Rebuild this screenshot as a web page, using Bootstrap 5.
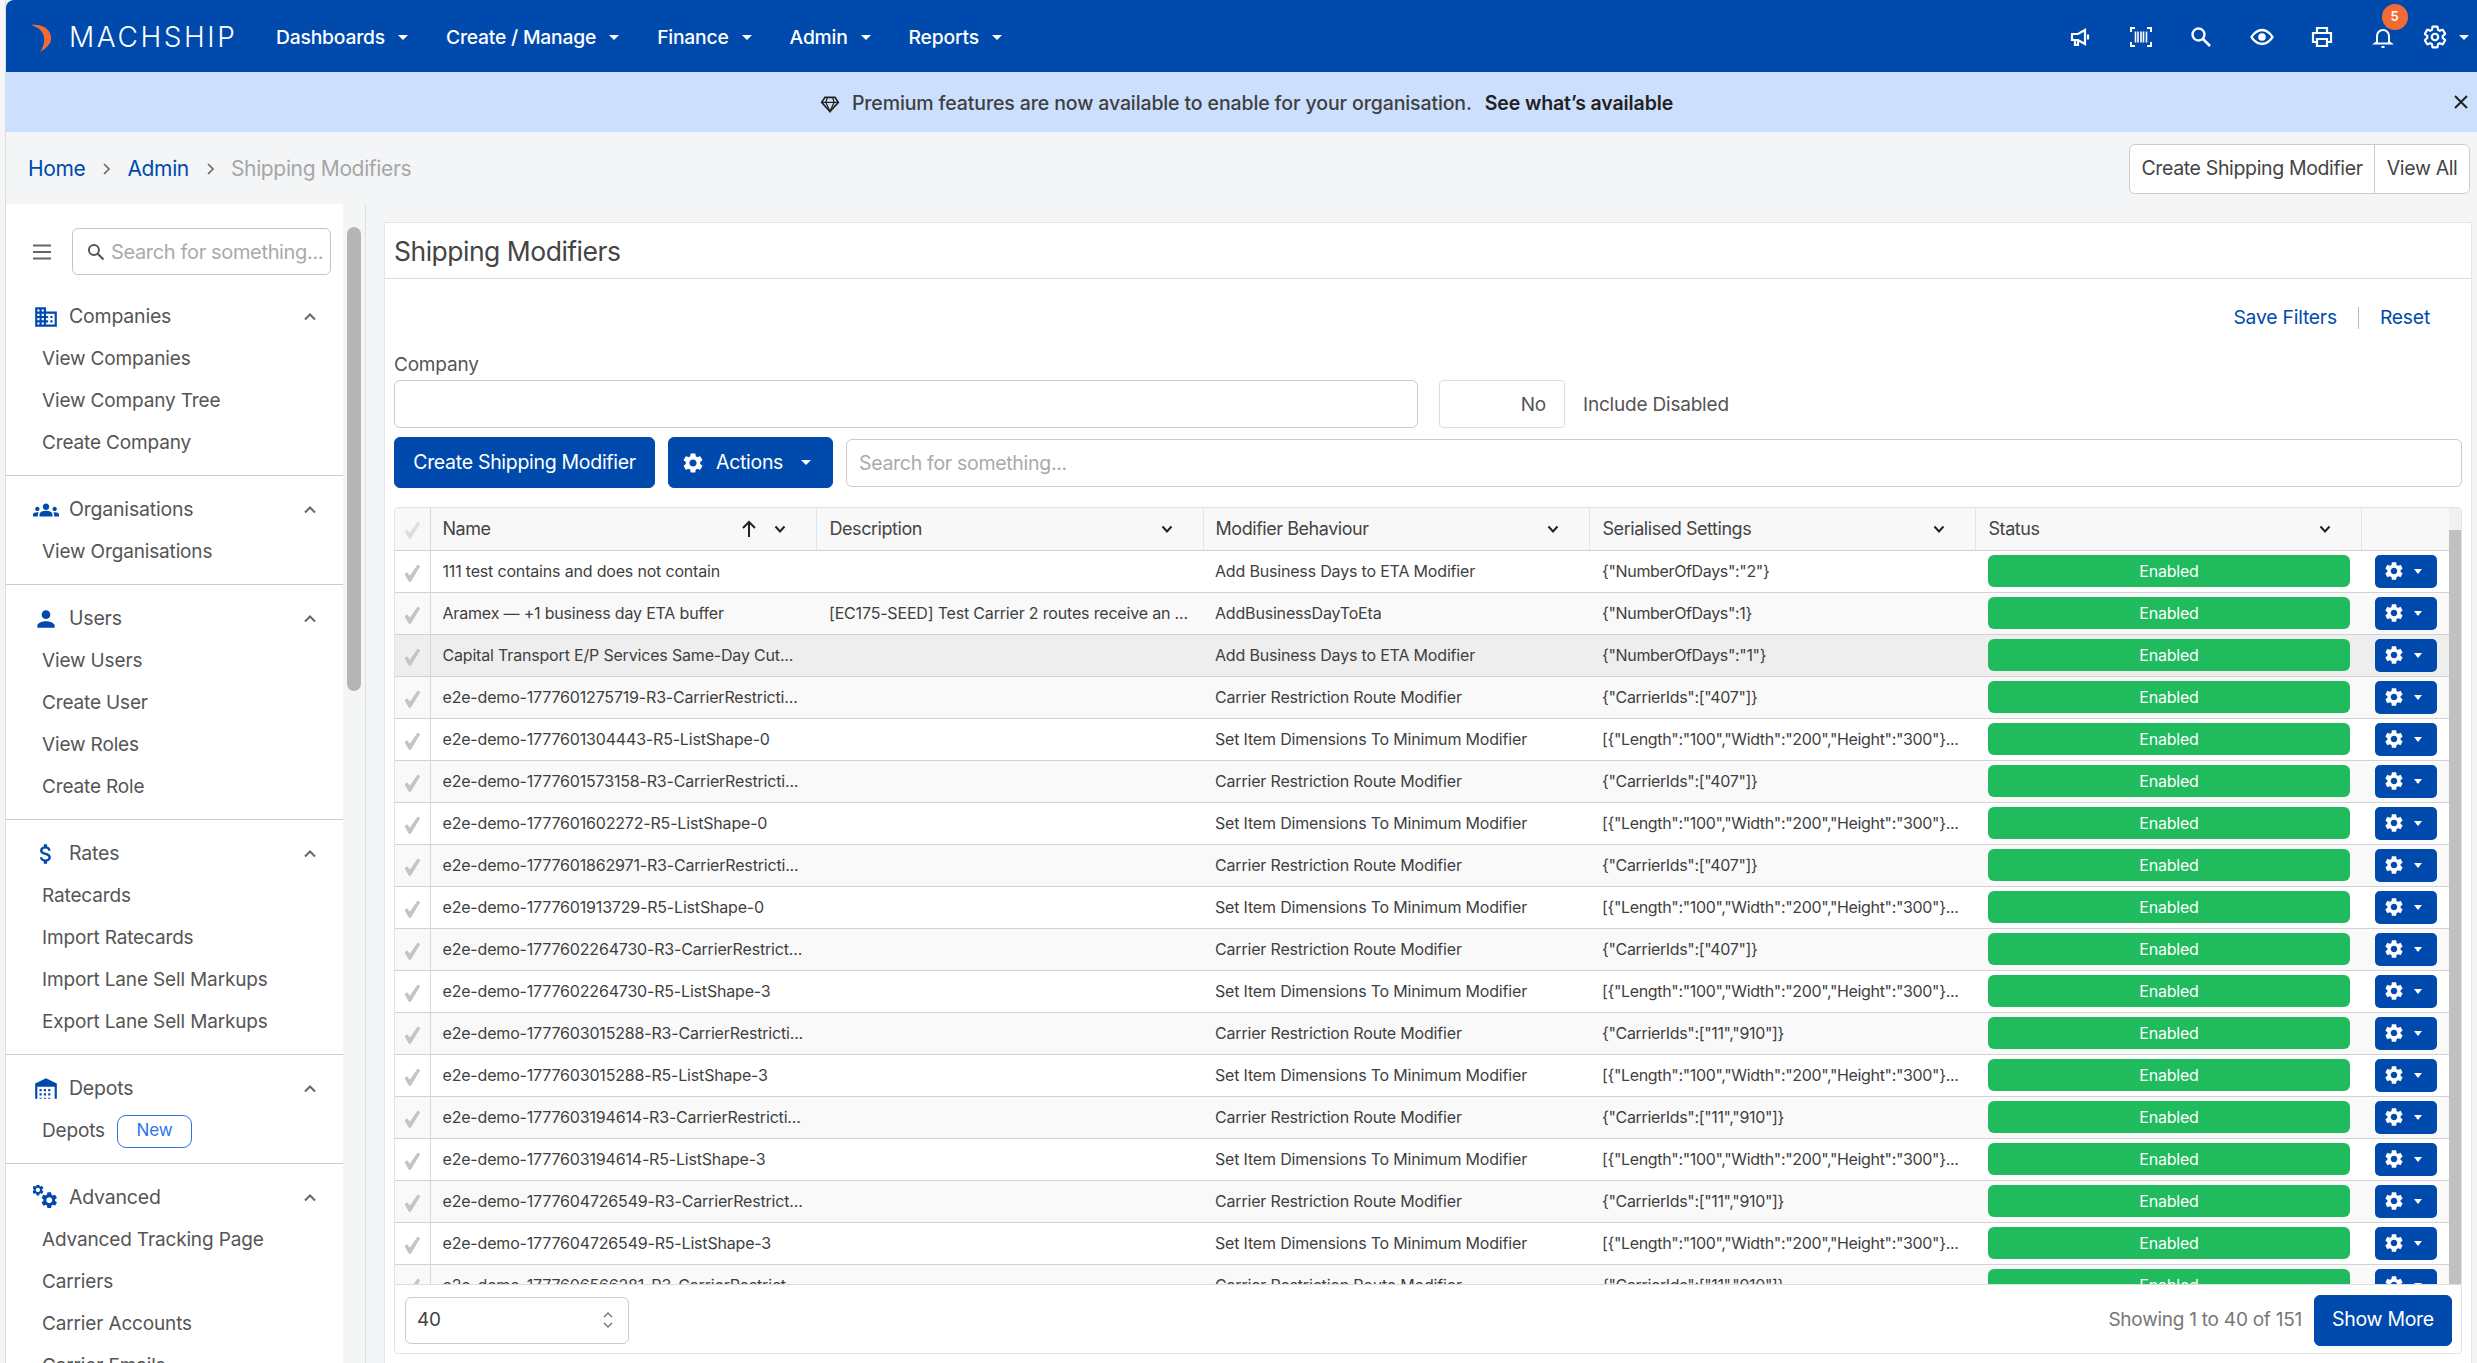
<!DOCTYPE html>
<html lang="en">
<head>
  <meta charset="UTF-8" />
  <title>Shipping Modifiers</title>
  <link href="https://cdn.jsdelivr.net/npm/bootstrap@5.3.0/dist/css/bootstrap.min.css" rel="stylesheet" />
  <style>
    :root { --ms-blue: #004aad; --ms-line: #d9d9d9; }
    html, body { height: 100%; overflow: hidden; }
    body { font-family: Inter, "Noto Sans", sans-serif; font-size: 19px; color: #444; background: #f4f5f7; letter-spacing: -0.2px; }
    a { text-decoration: none; }
    .shell { height: 1363px; margin-left: 5px; border-left: 1px solid #ddd; display: flex; flex-direction: column; }

    /* top bar */
    .ms-top { height: 72px; flex: none; background: var(--ms-blue); padding: 0; border-top-left-radius: 8px; flex-wrap: nowrap; justify-content: flex-start; }
    .ms-logo { display: flex; align-items: center; margin-left: 24px; width: 246px; color: #fff; font-size: 28px; font-weight: 300; letter-spacing: 2.6px; padding-top: 2px; }
    .ms-logo svg { width: 36px; height: 30px; margin-right: 3px; flex: none; }
    .ms-menu { display: flex; gap: 38px; align-items: center; color: #fff; font-size: 19.3px; font-weight: 500; padding-top: 3px; }
    .ms-menu span { display: flex; align-items: center; gap: 13px; white-space: nowrap; }
    .caret-w { width: 0; height: 0; border-left: 5px solid transparent; border-right: 5px solid transparent; border-top: 5px solid currentColor; display: inline-block; }
    .ms-tools { margin-left: auto; display: flex; align-items: center; color: #fff; padding-top: 2px; }
    .ms-tool { width: 60.5px; display: flex; justify-content: center; position: relative; }
    .ms-tool svg { width: 24px; height: 24px; }
    .ms-tool-last { display: flex; align-items: center; gap: 11px; margin-left: 9px; padding-right: 8px; }
    .ms-tool-last svg { width: 26px; height: 26px; }
    .ms-count { position: absolute; top: -21px; left: 29px; width: 26px; height: 26px; border-radius: 50%; background: #f26b35; color: #fff; font-size: 13px; font-weight: 600; display: flex; align-items: center; justify-content: center; letter-spacing: 0; }

    /* banner */
    .ms-promo { height: 60px; flex: none; background: #cce0fe; position: relative; display: flex; align-items: center; justify-content: center; gap: 13px; font-size: 19.5px; letter-spacing: -0.12px; color: #3f3f3f; font-weight: 500; padding: 3px 0 0 10px; }
    .ms-promo strong { color: #222; font-weight: 600; }
    .ms-promo svg { width: 20px; height: 20px; margin-right: -1px; }
    .ms-promo-x { position: absolute; right: 7px; top: 20px; width: 20px; height: 20px; }

    /* breadcrumb row */
    .ms-crumbs { height: 72px; flex: none; display: flex; align-items: center; justify-content: space-between; padding: 2px 7px 0 22px; }
    .ms-crumbs .breadcrumb { margin: 0; font-size: 21px; --bs-breadcrumb-item-padding-x: 0; --bs-breadcrumb-divider: none; align-items: center; gap: 14px; letter-spacing: -0.35px; }
    .ms-crumbs .breadcrumb-item + .breadcrumb-item::before { display: none; }
    .ms-crumbs .breadcrumb-item a { color: var(--ms-blue); }
    .ms-crumbs .breadcrumb-item.active { color: #a6a6a6; }
    .chev-s { width: 14px; height: 14px; color: #666; }
    .ms-pair .btn { background: #fff; border-color: #ccc; color: #444; font-size: 19.5px; height: 50px; padding: 0 11.5px; letter-spacing: -0.35px; }

    /* layout */
    .ms-work { flex: 1; display: flex; min-height: 0; }
    .ms-side { width: 337px; flex: none; background: #fff; overflow: hidden; padding-top: 24px; }
    .rail-a { width: 14px; flex: none; margin: 23px 4px 0 4px; }
    .rail-a div { height: 464px; background: #b5b5b5; border-radius: 7px; }
    .ms-vline { width: 1px; flex: none; background: #e0e0e0; }
    .ms-panel { flex: 1; margin: 18px 5px 0 18px; background: #fff; border: 1px solid #e6e6e6; border-bottom: 0; min-width: 0; }

    /* sidebar */
    .side-find { display: flex; align-items: center; padding-left: 24px; }
    .side-find svg.burger { width: 24px; height: 24px; color: #666; }
    .side-box { margin-left: 18px; width: 259px; height: 47px; border: 1px solid #c4c4c4; border-radius: 6px; display: flex; align-items: center; padding: 1px 0 0 13px; gap: 5px; color: #aaa; font-size: 20px; white-space: nowrap; letter-spacing: -0.35px; }
    .side-box svg { width: 20px; height: 20px; color: #555; flex: none; }
    .side-group { padding: 13px 0 11px; border-bottom: 1px solid #ccc; }
    .side-group:first-of-type { padding-top: 21px; }
    .side-group:last-child { border-bottom: 0; }
    .side-head { height: 42px; display: flex; align-items: center; padding-left: 27px; color: #555; font-size: 19.5px; position: relative; }
    .side-head > svg:first-child { width: 26px; height: 26px; color: var(--ms-blue); margin-right: 10px; flex: none; }
    .side-up { position: absolute; left: 297px; top: 14px; width: 14px; height: 14px; color: #666; margin: 0; }
    .side-link { height: 42px; display: flex; align-items: center; padding-left: 36px; color: #555; font-size: 19px; gap: 12px; white-space: nowrap; letter-spacing: -0.15px; }
    .tag-new { width: 75px; height: 33px; border: 1px solid #2f73e8; border-radius: 9px; color: #2f73e8; font-size: 17px; display: flex; align-items: center; justify-content: center; }

    /* panel */
    .panel-title { height: 56px; display: flex; align-items: center; padding: 2px 0 0 9px; font-size: 26.5px; font-weight: 400; color: #444; border-bottom: 1px solid #ddd; margin: 0; letter-spacing: -0.5px; }
    .panel-body { padding: 0 9px; }
    .filter-links { display: flex; justify-content: flex-end; align-items: center; padding: 26px 32px 0 0; height: 51px; font-size: 19.3px; letter-spacing: -0.2px; }
    .filter-links a { color: var(--ms-blue); }
    .filter-links i { width: 1px; height: 22px; background: #bbb; margin: 0 21px; }
    .field-label { margin: 22px 0 4px; height: 24px; line-height: 26px; font-size: 19px; color: #555; }
    .company-row { display: flex; align-items: center; height: 48px; }
    .company-row .form-control { width: 1024px; height: 48px; border-color: #ccc; }
    .no-box { width: 126px; height: 48px; margin-left: 21px; border: 1px solid #ddd; border-radius: 4px; display: flex; align-items: center; justify-content: flex-end; padding: 2px 18px 0 0; color: #555; }
    .no-label { margin-left: 18px; padding-top: 2px; color: #555; }
    .act-row { display: flex; gap: 13px; align-items: center; margin-top: 9px; height: 51px; }
    .btn-ms { background: var(--ms-blue); border-color: var(--ms-blue); color: #fff; font-size: 19.5px; height: 51px; display: inline-flex; align-items: center; letter-spacing: -0.3px; border-radius: 6px; white-space: nowrap; }
    .btn-ms:hover { background: var(--ms-blue); color: #fff; }
    .act-row .btn-create { width: 261px; justify-content: center; padding: 0; }
    .act-row .btn-actions { width: 165px; padding: 0 0 0 12px; }
    .act-row .btn-actions svg { width: 24px; height: 24px; margin-right: 11px; }
    .act-row .btn-actions .caret-w { margin-left: 18px; }
    .act-row .form-control { height: 48px; flex: 1; border-color: #ccc; font-size: 19.5px; padding-left: 12px; letter-spacing: -0.3px; }
    .act-row .form-control::placeholder { color: #aaa; }

    /* grid */
    .grid-card { margin-top: 19px; height: 847px; border: 1px solid #e3e3e3; border-radius: 4px; overflow: hidden; }
    .grid-top { display: flex; height: 776px; }
    .grid-scroll { width: 2054px; flex: none; overflow: hidden; }
    .rail-b { flex: 1; background: #f1f1f1; padding-top: 22px; }
    .rail-b div { height: 100%; background: #c1c1c1; }
    .ms-table { table-layout: fixed; width: 2054px; margin: 0; font-size: 16px; color: #3f3f3f; letter-spacing: -0.18px; }
    .ms-table > :not(caption) > * > * { padding: 0 4px 0 13px; height: 42px; vertical-align: middle; border-bottom: 1px solid #d2d2d2; white-space: nowrap; overflow: hidden; }
    .ms-table > :not(caption) > * > :nth-child(2), .ms-table > :not(caption) > * > :nth-child(4) { padding-left: 12px; }
    .ms-table th { --bs-table-bg: #f8f8f8; font-weight: 400; font-size: 18px; border-right: 1px solid #e4e4e4; color: #444; letter-spacing: -0.45px; }
    .ms-table th:first-child, .ms-table td:first-child { border-right: 1px solid #d8d8d8; padding: 0; text-align: center; }
    .ms-table th:last-child { border-right: 0; }
    .ms-table tbody tr:nth-child(even) > td { --bs-table-bg: #f9f9f9; }
    .ms-table tbody tr.row-hover > td { --bs-table-bg: #eeeeee; }
    .ms-table td.col-json { letter-spacing: -0.35px; }
    .ms-table td.col-act { padding: 0 0 0 14px; }
    .ms-table td.col-status { padding: 0 11px 0 13px; }
    .th-inner { display: flex; align-items: center; }
    .th-inner .chev-d { width: 14px; height: 14px; margin-left: auto; margin-right: 25px; color: #222; flex: none; }
    .th-inner .sort-up { width: 20px; height: 20px; margin-left: auto; margin-right: 14px; color: #222; flex: none; }
    .th-inner .sort-up + .chev-d { margin-left: 0; }
    .tick { width: 20px; height: 20px; color: #c4c4c4; }
    th .tick { color: #dedede; }
    .state-on { background: #1fbb5c; color: #fff; height: 32px; border-radius: 6px; display: flex; align-items: center; justify-content: center; letter-spacing: -0.2px; }
    .gear-btn { background: var(--ms-blue); color: #fff; width: 62px; height: 33px; border-radius: 5px; display: flex; align-items: center; padding-left: 8px; gap: 9px; }
    .gear-btn svg { width: 22px; height: 22px; }
    .gear-btn .caret-w { border-left-width: 4.5px; border-right-width: 4.5px; }
    .grid-foot { height: 70px; border-top: 1px solid #ddd; display: flex; align-items: center; padding: 1px 9px 0 10px; }
    .page-size { width: 224px; height: 47px; border: 1px solid #ccc; border-radius: 6px; display: flex; align-items: center; justify-content: space-between; padding: 0 14px 0 11px; color: #444; }
    .page-size svg { width: 12px; height: 24px; color: #777; }
    .show-count { margin-left: auto; margin-right: 12px; color: #777; letter-spacing: -0.25px; }
    .btn-more { width: 138px; justify-content: center; padding: 0; }
  </style>
</head>
<body>
<svg width="0" height="0" class="d-block">
  <defs>
    <symbol id="i-gear" viewBox="0 0 24 24"><path fill="currentColor" d="M19.14,12.94c0.04-0.3,0.06-0.61,0.06-0.94c0-0.32-0.02-0.64-0.07-0.94l2.03-1.58c0.18-0.14,0.23-0.41,0.12-0.61 l-1.92-3.32c-0.12-0.22-0.37-0.29-0.59-0.22l-2.39,0.96c-0.5-0.38-1.03-0.7-1.62-0.94L14.4,2.81c-0.04-0.24-0.24-0.41-0.48-0.41 h-3.84c-0.24,0-0.43,0.17-0.47,0.41L9.25,5.35C8.66,5.59,8.12,5.92,7.63,6.29L5.24,5.33c-0.22-0.08-0.47,0-0.59,0.22L2.74,8.87 C2.62,9.08,2.66,9.34,2.86,9.48l2.03,1.58C4.84,11.36,4.8,11.69,4.8,12s0.02,0.64,0.07,0.94l-2.03,1.58 c-0.18,0.14-0.23,0.41-0.12,0.61l1.92,3.32c0.12,0.22,0.37,0.29,0.59,0.22l2.39-0.96c0.5,0.38,1.03,0.7,1.62,0.94l0.36,2.54 c0.05,0.24,0.24,0.41,0.48,0.41h3.84c0.24,0,0.44-0.17,0.47-0.41l0.36-2.54c0.59-0.24,1.13-0.56,1.62-0.94l2.39,0.96 c0.22,0.08,0.47,0,0.59-0.22l1.92-3.32c0.12-0.22,0.07-0.47-0.12-0.61L19.14,12.94z M12,15.6c-1.98,0-3.6-1.62-3.6-3.6 s1.62-3.6,3.6-3.6s3.6,1.62,3.6,3.6S13.98,15.6,12,15.6z"/></symbol>
    <symbol id="i-gear-o" viewBox="0 0 24 24"><path fill="none" stroke="currentColor" stroke-width="2" d="M19.14,12.94c0.04-0.3,0.06-0.61,0.06-0.94c0-0.32-0.02-0.64-0.07-0.94l2.03-1.58c0.18-0.14,0.23-0.41,0.12-0.61 l-1.92-3.32c-0.12-0.22-0.37-0.29-0.59-0.22l-2.39,0.96c-0.5-0.38-1.03-0.7-1.62-0.94L14.4,2.81c-0.04-0.24-0.24-0.41-0.48-0.41 h-3.84c-0.24,0-0.43,0.17-0.47,0.41L9.25,5.35C8.66,5.59,8.12,5.92,7.63,6.29L5.24,5.33c-0.22-0.08-0.47,0-0.59,0.22L2.74,8.87 C2.62,9.08,2.66,9.34,2.86,9.48l2.03,1.58C4.84,11.36,4.8,11.69,4.8,12s0.02,0.64,0.07,0.94l-2.03,1.58 c-0.18,0.14-0.23,0.41-0.12,0.61l1.92,3.32c0.12,0.22,0.37,0.29,0.59,0.22l2.39-0.96c0.5,0.38,1.03,0.7,1.62,0.94l0.36,2.54 c0.05,0.24,0.24,0.41,0.48,0.41h3.84c0.24,0,0.44-0.17,0.47-0.41l0.36-2.54c0.59-0.24,1.13-0.56,1.62-0.94l2.39,0.96 c0.22,0.08,0.47,0,0.59-0.22l1.92-3.32c0.12-0.22,0.07-0.47-0.12-0.61L19.14,12.94z"/><circle cx="12" cy="12" r="3" fill="none" stroke="currentColor" stroke-width="2"/></symbol>
    <symbol id="i-up" viewBox="0 0 14 14"><path d="M2 9.5 7 4.5l5 5" fill="none" stroke="currentColor" stroke-width="2"/></symbol>
    <symbol id="i-down" viewBox="0 0 14 14"><path d="M2.5 4.5 7 9.5l4.5-5" fill="none" stroke="currentColor" stroke-width="2"/></symbol>
    <symbol id="i-right" viewBox="0 0 14 14"><path d="M5 2l5 5-5 5" fill="none" stroke="currentColor" stroke-width="1.6"/></symbol>
    <symbol id="i-find" viewBox="0 0 24 24"><circle cx="9.5" cy="9.5" r="6" fill="none" stroke="currentColor" stroke-width="2.4"/><path d="M14 14l7 7" stroke="currentColor" stroke-width="2.6"/></symbol>
    <symbol id="i-tick" viewBox="0 0 24 24"><path fill="currentColor" d="M3 13.5 6.2 11l3.2 4.2L18.6 2 22 3.6 10.6 22.5h-2.4z"/></symbol>
  </defs>
</svg>

<div class="shell">
  <!-- Top navigation -->
  <nav class="navbar ms-top">
    <div class="ms-logo">
      <svg viewBox="0 0 36 30"><path fill="#f26b35" d="M1 3c10-1 19 3 20 12 1 7-6 12-11 15 3-4 5-10 4-15C13 9 8 5 1 3z"/></svg>
      <span>MACHSHIP</span>
    </div>
    <div class="ms-menu">
      <span>Dashboards <i class="caret-w"></i></span>
      <span>Create / Manage <i class="caret-w"></i></span>
      <span>Finance <i class="caret-w"></i></span>
      <span>Admin <i class="caret-w"></i></span>
      <span>Reports <i class="caret-w"></i></span>
    </div>
    <div class="ms-tools">
      <div class="ms-tool"><svg viewBox="0 0 24 24" fill="none" stroke="currentColor" stroke-width="2.2"><path d="M4 9h6l7-4v14l-7-4H4z"/><path d="M7 15v5h3v-5"/><path d="M20 9.5v5" /></svg></div>
      <div class="ms-tool"><svg viewBox="0 0 24 24" fill="none" stroke="currentColor" stroke-width="2"><path d="M6 3H2v4M18 3h4v4M6 21H2v-4M18 21h4v-4"/><path d="M6.5 6.5v11M9 6.5v11M12 6.5v11M14.5 6.5v11M17.5 6.5v11" stroke-width="1.6"/></svg></div>
      <div class="ms-tool"><svg><use href="#i-find"/></svg></div>
      <div class="ms-tool"><svg viewBox="0 0 24 24" fill="none" stroke="currentColor" stroke-width="2.4"><path d="M1.5 12S5.5 5 12 5s10.5 7 10.5 7-4 7-10.5 7S1.5 12 1.5 12z"/><circle cx="12" cy="12" r="2.6" fill="currentColor"/></svg></div>
      <div class="ms-tool"><svg viewBox="0 0 24 24" fill="none" stroke="currentColor" stroke-width="2.2"><path d="M7 8V3h10v5"/><path d="M7 17H3V8h18v9h-4"/><path d="M7 14h10v7H7z"/></svg></div>
      <div class="ms-tool"><svg viewBox="0 0 24 24" fill="none" stroke="currentColor" stroke-width="2"><path d="M6 17V11a6 6 0 0 1 12 0v6l2 1.5H4z"/><path d="M10.5 22h3"/></svg><span class="ms-count">5</span></div>
      <div class="ms-tool-last"><svg><use href="#i-gear-o"/></svg><i class="caret-w"></i></div>
    </div>
  </nav>

  <!-- Premium banner -->
  <div class="ms-promo">
    <svg viewBox="0 0 24 24" fill="none" stroke="#222" stroke-width="2"><path d="M6 4h12l4 6-10 11L2 10z"/><path d="M2 10h20M9 4l-2 6 5 11 5-11-2-6" stroke-width="1.5"/></svg>
    <span>Premium features are now available to enable for your organisation.</span>
    <strong>See what’s available</strong>
    <svg class="ms-promo-x" viewBox="0 0 20 20" stroke="#222" stroke-width="2"><path d="M4 4l12 12M16 4 4 16"/></svg>
  </div>

  <!-- Breadcrumb and page actions -->
  <div class="ms-crumbs">
    <ol class="breadcrumb">
      <li class="breadcrumb-item"><a href="#">Home</a></li>
      <svg class="chev-s"><use href="#i-right"/></svg>
      <li class="breadcrumb-item"><a href="#">Admin</a></li>
      <svg class="chev-s"><use href="#i-right"/></svg>
      <li class="breadcrumb-item active">Shipping Modifiers</li>
    </ol>
    <div class="btn-group ms-pair">
      <button class="btn">Create Shipping Modifier</button>
      <button class="btn">View All</button>
    </div>
  </div>

  <div class="ms-work">
    <!-- Sidebar -->
    <aside class="ms-side">
      <div class="side-find">
        <svg class="burger" viewBox="0 0 24 24" stroke="currentColor" stroke-width="2"><path d="M3 5.5h18M3 12h18M3 18.5h18"/></svg>
        <div class="side-box"><svg><use href="#i-find"/></svg>Search for something...</div>
      </div>
      <div id="sideMenu"></div>
    </aside>
    <div class="rail-a"><div></div></div>
    <div class="ms-vline"></div>

    <!-- Main panel -->
    <main class="ms-panel">
      <h1 class="panel-title">Shipping Modifiers</h1>
      <div class="panel-body">
        <div class="filter-links"><a href="#">Save Filters</a><i></i><a href="#">Reset</a></div>
        <div class="field-label">Company</div>
        <div class="company-row">
          <input type="text" class="form-control" />
          <div class="no-box">No</div>
          <div class="no-label">Include Disabled</div>
        </div>
        <div class="act-row">
          <button class="btn btn-ms btn-create">Create Shipping Modifier</button>
          <button class="btn btn-ms btn-actions"><svg><use href="#i-gear"/></svg>Actions<i class="caret-w"></i></button>
          <input type="text" class="form-control" placeholder="Search for something..." />
        </div>

        <div class="grid-card">
          <div class="grid-top">
            <div class="grid-scroll">
              <table class="table ms-table">
                <colgroup><col style="width:35px"><col style="width:386px"><col style="width:387px"><col style="width:386px"><col style="width:386px"><col style="width:386px"><col style="width:88px"></colgroup>
                <thead>
                  <tr>
                    <th><svg class="tick"><use href="#i-tick"/></svg></th>
                    <th><div class="th-inner">Name<svg class="sort-up" viewBox="0 0 20 20" fill="none" stroke="currentColor" stroke-width="2"><path d="M10 18V3M4 9l6-6 6 6"/></svg><svg class="chev-d"><use href="#i-down"/></svg></div></th>
                    <th><div class="th-inner">Description<svg class="chev-d"><use href="#i-down"/></svg></div></th>
                    <th><div class="th-inner">Modifier Behaviour<svg class="chev-d"><use href="#i-down"/></svg></div></th>
                    <th><div class="th-inner">Serialised Settings<svg class="chev-d"><use href="#i-down"/></svg></div></th>
                    <th><div class="th-inner">Status<svg class="chev-d"><use href="#i-down"/></svg></div></th>
                    <th></th>
                  </tr>
                </thead>
                <tbody id="modifierRows"></tbody>
              </table>
            </div>
            <div class="rail-b"><div></div></div>
          </div>
          <div class="grid-foot">
            <div class="page-size">40<svg viewBox="0 0 12 24" fill="none" stroke="currentColor" stroke-width="1.5"><path d="M2 9l4-4 4 4M2 15l4 4 4-4"/></svg></div>
            <span class="show-count">Showing 1 to 40 of 151</span>
            <button class="btn btn-ms btn-more">Show More</button>
          </div>
        </div>
      </div>
    </main>
  </div>
</div>

<script src="https://cdn.jsdelivr.net/npm/bootstrap@5.3.0/dist/js/bootstrap.bundle.min.js"></script>
<script>
  const sideIcons = {
    building: '<path fill="currentColor" d="M12 7V3H2v18h20V7H12zM6 19H4v-2h2v2zm0-4H4v-2h2v2zm0-4H4V9h2v2zm0-4H4V5h2v2zm4 12H8v-2h2v2zm0-4H8v-2h2v2zm0-4H8V9h2v2zm0-4H8V5h2v2zm10 12h-8v-2h2v-2h-2v-2h2v-2h-2V9h8v10zm-2-8h-2v2h2v-2zm0 4h-2v2h2v-2z"/>',
    groups: '<path fill="currentColor" d="M12 12.75c1.63 0 3.07.39 4.24.9 1.08.48 1.76 1.56 1.76 2.73V18H6v-1.61c0-1.18.68-2.26 1.76-2.73 1.17-.52 2.61-.91 4.24-.91zM4 13c1.1 0 2-.9 2-2s-.9-2-2-2-2 .9-2 2 .9 2 2 2zm1.13 1.1C4.76 14.04 4.39 14 4 14c-.99 0-1.93.21-2.78.58C.48 14.9 0 15.62 0 16.43V18h4.5v-1.61c0-.83.23-1.61.63-2.29zM20 13c1.1 0 2-.9 2-2s-.9-2-2-2-2 .9-2 2 .9 2 2 2zm4 3.43c0-.81-.48-1.53-1.22-1.85C21.93 14.21 20.99 14 20 14c-.39 0-.76.04-1.13.1.4.68.63 1.46.63 2.29V18H24v-1.57zM12 6c1.66 0 3 1.34 3 3s-1.34 3-3 3-3-1.34-3-3 1.34-3 3-3z"/>',
    person: '<path fill="currentColor" d="M12 12c2.21 0 4-1.79 4-4s-1.79-4-4-4-4 1.79-4 4 1.79 4 4 4zm0 2c-2.67 0-8 1.34-8 4v2h16v-2c0-2.66-5.33-4-8-4z"/>',
    money: '<path fill="currentColor" d="M11.8 10.9c-2.27-.59-3-1.2-3-2.15 0-1.09 1.01-1.85 2.7-1.85 1.78 0 2.44.85 2.5 2.1h2.21c-.07-1.72-1.12-3.3-3.21-3.81V3h-3v2.16c-1.94.42-3.5 1.68-3.5 3.61 0 2.31 1.91 3.46 4.7 4.13 2.5.6 3 1.48 3 2.41 0 .69-.49 1.79-2.7 1.79-2.06 0-2.87-.92-2.98-2.1h-2.2c.12 2.19 1.76 3.42 3.68 3.83V21h3v-2.15c1.95-.37 3.5-1.5 3.5-3.55 0-2.84-2.43-3.81-4.7-4.4z"/>',
    depot: '<path fill="currentColor" d="M12 2 2 7v14h2V10h16v11h2V7zM6 12h2v2H6zm4 0h2v2h-2zm4 0h2v2h-2zm-8 4h2v2H6zm4 0h2v2h-2zm4 0h2v2h-2zM6 20h2v1H6zm4 0h2v1h-2zm4 0h2v1h-2z"/>',
    gears: '<use href="#i-gear" x="-2" y="-2" width="13" height="13"/><use href="#i-gear" x="6" y="5" width="18" height="18"/>'
  };

  const sideMenu = [
    { title: 'Companies', icon: 'building', links: ['View Companies', 'View Company Tree', 'Create Company'] },
    { title: 'Organisations', icon: 'groups', links: ['View Organisations'] },
    { title: 'Users', icon: 'person', links: ['View Users', 'Create User', 'View Roles', 'Create Role'] },
    { title: 'Rates', icon: 'money', links: ['Ratecards', 'Import Ratecards', 'Import Lane Sell Markups', 'Export Lane Sell Markups'] },
    { title: 'Depots', icon: 'depot', links: ['Depots|new'] },
    { title: 'Advanced', icon: 'gears', links: ['Advanced Tracking Page', 'Carriers', 'Carrier Accounts', 'Carrier Emails'] }
  ];

  // Sidebar groups
  document.getElementById('sideMenu').innerHTML = sideMenu.map(g => `
    <div class="side-group">
      <div class="side-head">
        <svg viewBox="0 0 24 24">${sideIcons[g.icon]}</svg>${g.title}
        <svg class="side-up"><use href="#i-up"/></svg>
      </div>
      ${g.links.map(l => {
        const [text, flag] = l.split('|');
        return `<div class="side-link">${text}${flag ? '<span class="tag-new">New</span>' : ''}</div>`;
      }).join('')}
    </div>`).join('');

  const ETA = 'Add Business Days to ETA Modifier';
  const ROUTE = 'Carrier Restriction Route Modifier';
  const DIMS = 'Set Item Dimensions To Minimum Modifier';
  const dimsJson = '[{"Length":"100","Width":"200","Height":"300"}...';
  const c407 = '{"CarrierIds":["407"]}';
  const c910 = '{"CarrierIds":["11","910"]}';

  const modifiers = [
    ['111 test contains and does not contain', '', ETA, '{"NumberOfDays":"2"}'],
    ['Aramex — +1 business day ETA buffer', '[EC175-SEED] Test Carrier 2 routes receive an ...', 'AddBusinessDayToEta', '{"NumberOfDays":1}'],
    ['Capital Transport E/P Services Same-Day Cut...', '', ETA, '{"NumberOfDays":"1"}'],
    ['e2e-demo-1777601275719-R3-CarrierRestricti...', '', ROUTE, c407],
    ['e2e-demo-1777601304443-R5-ListShape-0', '', DIMS, dimsJson],
    ['e2e-demo-1777601573158-R3-CarrierRestricti...', '', ROUTE, c407],
    ['e2e-demo-1777601602272-R5-ListShape-0', '', DIMS, dimsJson],
    ['e2e-demo-1777601862971-R3-CarrierRestricti...', '', ROUTE, c407],
    ['e2e-demo-1777601913729-R5-ListShape-0', '', DIMS, dimsJson],
    ['e2e-demo-1777602264730-R3-CarrierRestrict...', '', ROUTE, c407],
    ['e2e-demo-1777602264730-R5-ListShape-3', '', DIMS, dimsJson],
    ['e2e-demo-1777603015288-R3-CarrierRestricti...', '', ROUTE, c910],
    ['e2e-demo-1777603015288-R5-ListShape-3', '', DIMS, dimsJson],
    ['e2e-demo-1777603194614-R3-CarrierRestricti...', '', ROUTE, c910],
    ['e2e-demo-1777603194614-R5-ListShape-3', '', DIMS, dimsJson],
    ['e2e-demo-1777604726549-R3-CarrierRestrict...', '', ROUTE, c910],
    ['e2e-demo-1777604726549-R5-ListShape-3', '', DIMS, dimsJson],
    ['e2e-demo-1777606566281-R3-CarrierRestrict...', '', ROUTE, c910]
  ];

  // Table rows
  document.getElementById('modifierRows').innerHTML = modifiers.map((m, i) => `
    <tr class="${i === 2 ? 'row-hover' : ''}">
      <td><svg class="tick"><use href="#i-tick"/></svg></td>
      <td>${m[0]}</td>
      <td>${m[1]}</td>
      <td>${m[2]}</td>
      <td class="col-json">${m[3]}</td>
      <td class="col-status"><div class="state-on">Enabled</div></td>
      <td class="col-act"><div class="gear-btn"><svg><use href="#i-gear"/></svg><i class="caret-w"></i></div></td>
    </tr>`).join('');
</script>
</body>
</html>
